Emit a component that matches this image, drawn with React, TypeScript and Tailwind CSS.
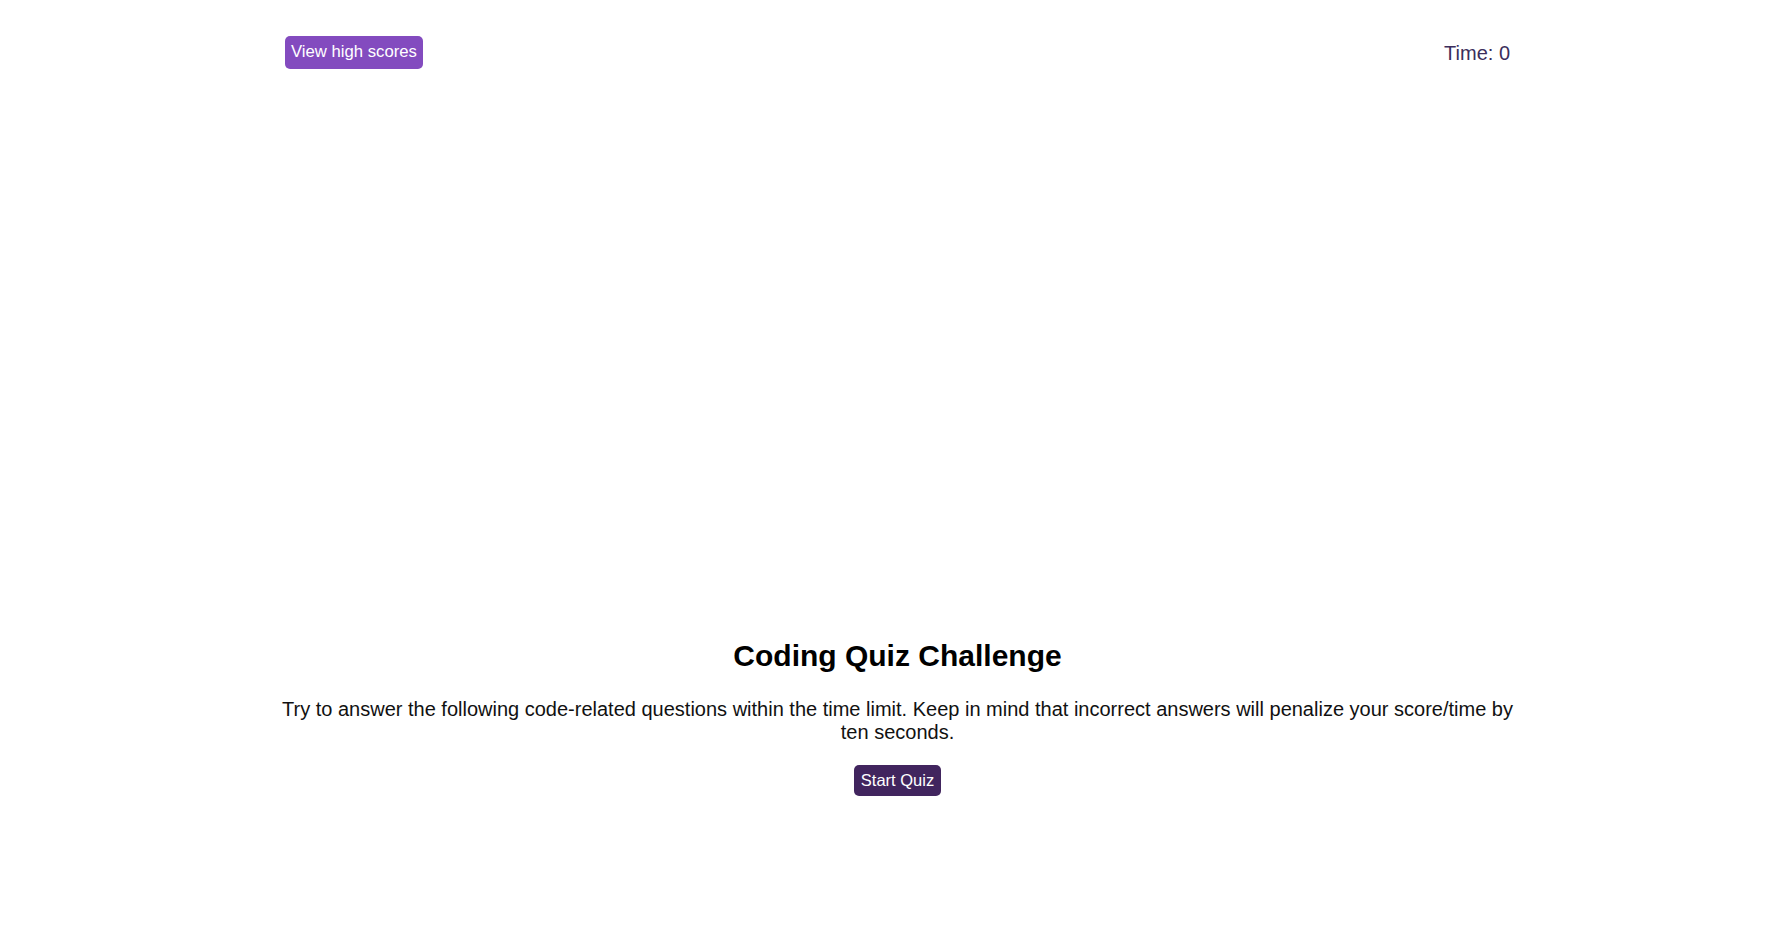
export default function App() {
  const time = 0;

  return (
    <div className="min-h-screen bg-white pl-[3px] font-['Liberation_Sans',Arial,sans-serif]">
      <header className="w-[1225px] mx-auto pt-[36px] flex items-center justify-between">
        <button className="h-[33px] px-[6px] rounded-[5px] bg-[#834bbf] text-white text-[16.7px] leading-none">
          View high scores
        </button>
        <div className="text-[20px] text-[#3b2e5c]">Time: {time}</div>
      </header>

      <main className="w-[1250px] mx-auto mt-[570px] flex flex-col items-center text-center">
        <h1 className="text-[30px] font-bold text-black leading-[34px]">
          Coding Quiz Challenge
        </h1>
        <p className="mt-[25px] text-[20px] leading-[23px] text-[#111]">
          Try to answer the following code-related questions within the time limit. Keep in mind that
          incorrect answers will penalize your score/time by ten seconds.
        </p>
        <button className="mt-[21px] h-[31px] px-[7px] rounded-[5px] bg-[#41255e] text-white text-[16.5px] leading-none">
          Start Quiz
        </button>
      </main>
    </div>
  );
}
